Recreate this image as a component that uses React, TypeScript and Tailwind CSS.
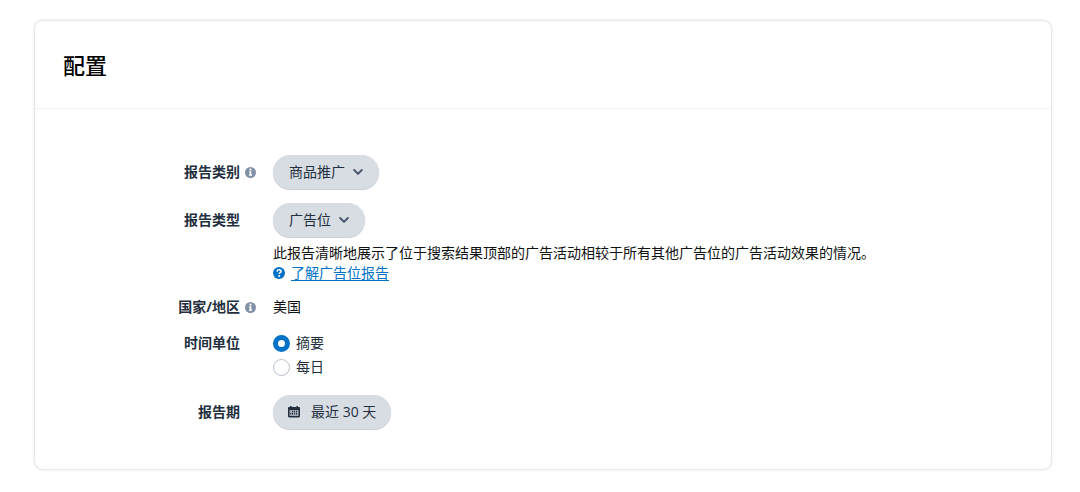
import React, { useState } from "react";

const InfoIcon: React.FC = () => (
  <svg className="w-[11px] h-[11px] shrink-0" viewBox="0 0 12 12" aria-hidden="true">
    <circle cx="6" cy="6" r="6" fill="#8290a6" />
    <circle cx="6" cy="2.8" r="1.2" fill="#fff" />
    <path d="M4.4 4.7h2.5v3.6h.8v1.3H4.3V8.300h.8V6h-.7z" fill="#fff" />
  </svg>
);

const HelpIcon: React.FC = () => (
  <svg className="w-3 h-3 shrink-0" viewBox="0 0 12 12" aria-hidden="true">
    <circle cx="6" cy="6" r="6" fill="#0073c7" />
    <path
      d="M4 4.6C4.2 3.3 5 2.8 6 2.8c1.200 0 2 .6 2 1.600C8 5.700 6.100 5.600 6.100 7"
      fill="none"
      stroke="#fff"
      strokeWidth="1.6"
    />
    <circle cx="6.1" cy="8.900" r="1" fill="#fff" />
  </svg>
);

const CalendarIcon: React.FC = () => (
  <svg className="w-3 h-3 shrink-0" viewBox="0 0 12 12" aria-hidden="true">
    <path
      d="M2 0h1.500v1h5V0H10v1h.8C11.500 1 12 1.500 12 2.200v8.100c0 .7-.5 1.200-1.200 1.200H1.200C.5 11.500 0 11 0 10.300V2.200C0 1.500.5 1 1.200 1H2z"
      fill="#232f3e"
    />
    <path d="M1.500 4h9v6h-9z" fill="#a3abb7" />
    <path
      d="M4 4.800h1v1.400H4zM6 4.800h1v1.400H6zM8 4.800h1v1.400H8zM2.300 7h1v1.400h-1zM4 7h1v1.400H4zM6 7h1v1.400H6zM8 7h1v1.400H8z"
      fill="#232f3e"
    />
  </svg>
);

const pill =
  "h-[34px] rounded-full bg-[#d8dde4] text-[#232f3e] shadow-[0_1px_1px_rgba(35,47,62,0.25)] cursor-pointer";

type PillSelectProps = {
  id: string;
  options: string[];
};

const PillSelect: React.FC<PillSelectProps> = ({ id, options }) => (
  <div className="relative w-fit">
    <select id={id} className={`${pill} block appearance-none pl-4 pr-[34px]`}>
      {options.map((option) => (
        <option key={option}>{option}</option>
      ))}
    </select>
    <svg
      className="pointer-events-none absolute right-4 top-3 w-[10px] h-[10px]"
      viewBox="0 0 10 10"
      aria-hidden="true"
    >
      <path
        d="M1.200 3L5 6.800 8.800 3"
        fill="none"
        stroke="#46546a"
        strokeWidth="1.9"
        strokeLinecap="round"
        strokeLinejoin="round"
      />
    </svg>
  </div>
);

type RowProps = {
  label: string;
  htmlFor?: string;
  info?: boolean;
  labelClass?: string;
  children: React.ReactNode;
};

const Row: React.FC<RowProps> = ({ label, htmlFor, info, labelClass = "h-5", children }) => (
  <div className="flex gap-[17px]">
    <div className={`w-[221px] shrink-0 flex items-center justify-end gap-1 ${labelClass}`}>
      {htmlFor ? (
        <label htmlFor={htmlFor} className="font-bold text-[#232f3e]">
          {label}
        </label>
      ) : (
        <span className="font-bold text-[#232f3e]">{label}</span>
      )}
      <span className="w-3 flex justify-center">{info && <InfoIcon />}</span>
    </div>
    <div className="min-w-0 flex-1">{children}</div>
  </div>
);

const units = ["摘要", "每日"];

const App: React.FC = () => {
  const [unit, setUnit] = useState("摘要");

  return (
    <main className="py-[21px] pl-[35px] pr-[29px] font-['Open_Sans','Noto_Sans_CJK_SC',sans-serif] text-sm leading-5 text-[#0f1111]">
      <section className="rounded-lg bg-white shadow-[0_0_3px_rgba(35,47,62,0.3)]">
        <header className="border-b border-[#f0f1f3] px-7 pt-7 pb-[27px]">
          <h1 className="text-[22px] leading-8 font-medium text-black">配置</h1>
        </header>

        <form className="pt-[46px] pb-10">
          <div className="flex flex-col gap-[14px]">
            <Row label="报告类别" htmlFor="category" info labelClass="h-[34px]">
              <PillSelect id="category" options={["商品推广"]} />
            </Row>

            <Row label="报告类型" htmlFor="type" labelClass="h-[34px]">
              <PillSelect id="type" options={["广告位"]} />
              <p className="mt-[6px]">
                此报告清晰地展示了位于搜索结果顶部的广告活动相较于所有其他广告位的广告活动效果的情况。
              </p>
              <a href="#" className="w-fit flex items-center gap-[6px] text-[#0073c7]">
                <HelpIcon />
                <span className="underline underline-offset-2">了解广告位报告</span>
              </a>
            </Row>

            <Row label="国家/地区" info>
              美国
            </Row>

            <Row label="时间单位" labelClass="h-6">
              <div className="flex flex-col" role="radiogroup" aria-label="时间单位">
                {units.map((name) => (
                  <label key={name} className="w-fit h-6 flex items-center gap-[6px] text-[#232f3e]">
                    <input
                      type="radio"
                      name="unit"
                      checked={unit === name}
                      onChange={() => setUnit(name)}
                      className="appearance-none w-[17px] h-[17px] rounded-full border border-[#b6bfcc] bg-white checked:border-[5px] checked:border-[#0073c7]"
                    />
                    {name}
                  </label>
                ))}
              </div>
            </Row>
          </div>

          <div className="mt-4">
            <Row label="报告期" htmlFor="period" labelClass="h-[34px]">
              <button id="period" type="button" className={`${pill} flex items-center gap-[11px] px-[15px]`}>
                <CalendarIcon />
                最近 30 天
              </button>
            </Row>
          </div>
        </form>
      </section>
    </main>
  );
};

export default App;
